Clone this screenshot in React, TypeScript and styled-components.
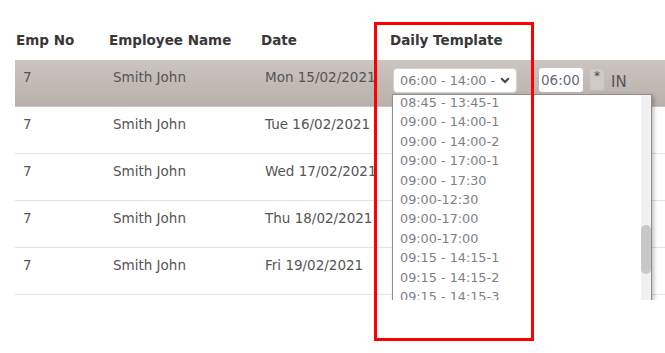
import React from "react";
import styled, { createGlobalStyle } from "styled-components";

const GlobalStyle = createGlobalStyle`
  body {
    margin: 0;
    background: #ffffff;
    font-family: "DejaVu Sans", "Noto Sans", sans-serif;
  }
`;

const rows = [
  { no: "7", name: "Smith John", date: "Mon 15/02/2021", active: true },
  { no: "7", name: "Smith John", date: "Tue 16/02/2021" },
  { no: "7", name: "Smith John", date: "Wed 17/02/2021" },
  { no: "7", name: "Smith John", date: "Thu 18/02/2021" },
  { no: "7", name: "Smith John", date: "Fri 19/02/2021" },
];

const templates = [
  "08:45 - 13:45-1",
  "09:00 - 14:00-1",
  "09:00 - 14:00-2",
  "09:00 - 17:00-1",
  "09:00 - 17:30",
  "09:00-12:30",
  "09:00-17:00",
  "09:00-17:00",
  "09:15 - 14:15-1",
  "09:15 - 14:15-2",
  "09:15 - 14:15-3",
];

const App: React.FC = () => {
  return (
    <Page>
      <GlobalStyle />
      <Table>
        <HeadRow>
          <HeadCell $w={93}>Emp No</HeadCell>
          <HeadCell $w={152}>Employee Name</HeadCell>
          <HeadCell $w={129}>Date</HeadCell>
          <HeadCell>Daily Template</HeadCell>
        </HeadRow>
        {rows.map((r, i) => (
          <Row key={i} $active={r.active}>
            <Cell $w={90}>{r.no}</Cell>
            <Cell $w={152}>{r.name}</Cell>
            <Cell $w={128}>{r.date}</Cell>
            {r.active && (
              <Cell>
                <Controls>
                  <SelectWrap>
                    <SelectBox>
                      <span>06:00 - 14:00 -</span>
                      <svg width="10" height="7" viewBox="0 0 10 7">
                        <path
                          d="M1.2 1.3 L5 5 L8.8 1.3"
                          fill="none"
                          stroke="#444"
                          strokeWidth="2"
                        />
                      </svg>
                    </SelectBox>
                    <OptionList>
                      <Options>
                        {templates.map((t, j) => (
                          <Option key={j}>{t}</Option>
                        ))}
                      </Options>
                      <Track>
                        <Thumb />
                      </Track>
                    </OptionList>
                  </SelectWrap>
                  <TimeInput>06:00</TimeInput>
                  <StarBox>*</StarBox>
                  <Direction>IN</Direction>
                </Controls>
              </Cell>
            )}
          </Row>
        ))}
      </Table>
      <Highlight />
    </Page>
  );
};

export default App;

const Page = styled.div`
  position: relative;
  width: 665px;
  height: 353px;
  overflow: hidden;
  padding: 19px 0 0 15px;
  box-sizing: border-box;
`;

const Table = styled.div`
  display: flex;
  flex-direction: column;
  width: 680px;
  height: 281px;
  overflow: hidden;
`;

const HeadRow = styled.div`
  display: flex;
  align-items: center;
  height: 41px;
  flex-shrink: 0;
`;

const HeadCell = styled.div<{ $w?: number }>`
  width: ${(p) => (p.$w ? `${p.$w}px` : "auto")};
  padding-left: 1px;
  box-sizing: border-box;
  font-size: 13.5px;
  font-weight: 600;
  color: #383838;
  white-space: nowrap;
`;

const Row = styled.div<{ $active?: boolean }>`
  display: flex;
  align-items: flex-start;
  height: 47px;
  flex-shrink: 0;
  box-sizing: border-box;
  border-bottom: 1px solid ${(p) => (p.$active ? "transparent" : "#e2e2e2")};
  background: ${(p) =>
    p.$active ? "linear-gradient(#cbc4c0, #b9b0ab)" : "transparent"};
`;

const Cell = styled.div<{ $w?: number }>`
  width: ${(p) => (p.$w ? `${p.$w}px` : "auto")};
  padding: 8px 0 0 8px;
  box-sizing: border-box;
  font-size: 13.5px;
  line-height: 19px;
  color: #555;
  white-space: nowrap;
`;

const Controls = styled.div`
  display: flex;
  align-items: flex-start;
  gap: 6px;
`;

const SelectWrap = styled.div`
  position: relative;
  margin-right: 16px;
`;

const SelectBox = styled.div`
  display: flex;
  align-items: center;
  justify-content: space-between;
  width: 124px;
  height: 25px;
  padding: 0 6px 0 6px;
  box-sizing: border-box;
  background: #fff;
  border: 1px solid #d6d1ce;
  border-radius: 4px;
  font-size: 12.8px;
  color: #7a7a86;
`;

const OptionList = styled.div`
  position: absolute;
  top: 26px;
  left: -1px;
  width: 260px;
  height: 206px;
  background: #fff;
  border: 1px solid #8f8f8f;
  border-bottom: none;
  box-sizing: border-box;
  box-shadow: 2px 2px 4px rgba(0, 0, 0, 0.25);
  overflow: hidden;
  z-index: 2;
`;

const Options = styled.div`
  margin-top: -2px;
  padding-left: 7px;
`;

const Option = styled.div`
  height: 19.4px;
  line-height: 19.4px;
  font-size: 12.8px;
  color: #7e7e8a;
`;

const Track = styled.div`
  position: absolute;
  top: 0;
  right: 0;
  width: 10px;
  height: 100%;
  background: #f1f1f1;
`;

const Thumb = styled.div`
  position: absolute;
  top: 130px;
  left: 0;
  width: 10px;
  height: 49px;
  border-radius: 5px;
  background: #c8c8c8;
`;

const TimeInput = styled.div`
  width: 44px;
  height: 24px;
  box-sizing: border-box;
  padding-left: 2px;
  background: #fff;
  border-radius: 3px;
  font-size: 13.5px;
  line-height: 24px;
  color: #6a6a78;
`;

const StarBox = styled.div`
  width: 16px;
  height: 23px;
  box-sizing: border-box;
  padding: 1px 0 0 4px;
  background: #cfcac7;
  border: 1px solid #c2bcb8;
  border-radius: 3px;
  font-size: 12px;
  line-height: 12px;
  color: #444;
`;

const Direction = styled.div`
  font-size: 15px;
  line-height: 24px;
  color: #555;
  padding-top: 2px;
`;

const Highlight = styled.div`
  position: absolute;
  left: 374px;
  top: 22px;
  width: 160px;
  height: 319px;
  border: 3px solid #ff0000;
  box-sizing: border-box;
  pointer-events: none;
  z-index: 3;
`;
